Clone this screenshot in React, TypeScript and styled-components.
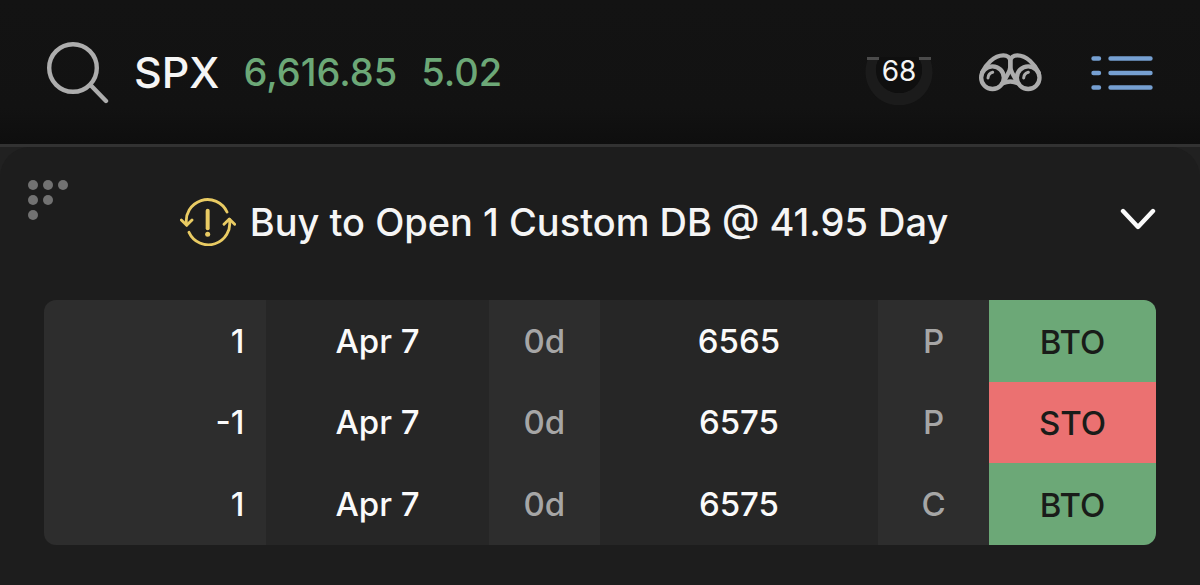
import React from "react";
import styled, { createGlobalStyle } from "styled-components";

const GlobalStyle = createGlobalStyle`
  *, *::before, *::after { box-sizing: border-box; }
  html { background: #1d1d1d; }
  body {
    margin: 0;
    background: #1d1d1d;
    color: #f5f5f5;
    font-family: Inter, "Liberation Sans", sans-serif;
    font-weight: 500;
  }
`;

const Page = styled.div`
  display: flex;
  flex-direction: column;
  min-height: 100vh;
  background: #212121;
`;

const TopBar = styled.header`
  display: flex;
  align-items: center;
  height: 147px;
  padding: 0 46px 0 44px;
  border-bottom: 3px solid #323232;
  background: linear-gradient(#131313 0%, #121212 75%, #0e0e0e 100%);
`;

const IconButton = styled.button`
  display: flex;
  align-items: center;
  justify-content: center;
  padding: 0;
  border: 0;
  background: none;
  color: ${({ $color }: { $color: string }) => $color};
  cursor: pointer;

  svg { display: block; }
`;

const Quote = styled.div`
  display: flex;
  align-items: center;
  flex: 1;
  margin-left: 22px;
  line-height: 48px;
  white-space: nowrap;
`;

const Symbol = styled.span`
  font-size: 43px;
`;

const Price = styled.span`
  margin-left: 24px;
  color: #6ca877;
  font-size: 38px;
`;

const Tools = styled.div`
  display: flex;
  align-items: center;
  gap: 45px;
`;

const Gauge = styled.div`
  display: grid;
  place-items: center;
  margin-top: 18px;

  > * { grid-area: 1 / 1; }
`;

const GaugeValue = styled.span`
  align-self: start;
  font-size: 28px;
  font-weight: 400;
  line-height: 28px;
`;

const Panel = styled.main`
  flex: 1;
  padding: 33px 44px 40px;
  border-radius: 30px 30px 0 0;
  background: #1d1d1d;
`;

const OrderHeader = styled.div`
  display: flex;
  align-items: flex-start;
  height: 120px;
  margin-left: -16px;
`;

const OrderTitle = styled.div`
  display: flex;
  align-items: center;
  justify-content: center;
  flex: 1;
  gap: 14px;
  margin-top: 18px;
  padding-right: 60px;
`;

const TitleText = styled.h1`
  margin: 0;
  font-size: 38px;
  font-weight: 500;
  line-height: 48px;
  white-space: nowrap;
`;

const ExpandButton = styled(IconButton)`
  margin-top: 28px;
`;

const Legs = styled.table`
  width: 100%;
  height: 245px;
  table-layout: fixed;
  border-collapse: collapse;
  border-radius: 12px;
  overflow: hidden;
  font-size: 33px;
  line-height: 40px;
  text-align: center;
`;

const Column = styled.col<{ $width: number }>`
  width: ${({ $width }) => $width}%;
`;

const Cell = styled.td<{ $dim?: boolean }>`
  padding: 0;
  background: ${({ $dim }) => ($dim ? "#2d2d2d" : "#262626")};
  color: ${({ $dim }) => ($dim ? "#a6a6a6" : "#fafafa")};
`;

const QuantityCell = styled(Cell)`
  padding-right: 22px;
  background: #2d2d2d;
  text-align: right;
`;

const ActionCell = styled(Cell)<{ $buy: boolean }>`
  padding-top: 2px;
  background: ${({ $buy }) => ($buy ? "#6ca877" : "#eb7171")};
  color: #191c19;
`;

const legs = [
  { quantity: "1", expiry: "Apr 7", days: "0d", strike: "6565", type: "P", action: "BTO" },
  { quantity: "-1", expiry: "Apr 7", days: "0d", strike: "6575", type: "P", action: "STO" },
  { quantity: "1", expiry: "Apr 7", days: "0d", strike: "6575", type: "C", action: "BTO" },
];

const SearchIcon = () => (
  <svg width="68" height="64" viewBox="0 0 68 64" fill="none" stroke="currentColor" strokeWidth="4.4" strokeLinecap="round">
    <circle cx="29" cy="28" r="23.8" />
    <path d="M46.5 45L62 61" />
  </svg>
);

const GaugeArc = () => (
  <svg width="68" height="48" viewBox="0 0 68 48" aria-hidden="true">
    <path d="M4 0A33.5 33.5 0 1 0 64 0H53A23 23 0 1 1 15 0Z" fill="#1b1b1b" />
    <path d="M15 0A23 23 0 1 0 53 0Z" fill="#0f0f0f" />
    <path d="M2 1.5H14M54 1.5H66" stroke="#4b4b4b" strokeWidth="3" />
  </svg>
);

const BinocularsIcon = () => (
  <svg width="64" height="40" viewBox="0 0 192 120" fill="none" stroke="currentColor" strokeWidth="13" strokeLinecap="round" strokeLinejoin="round">
    <circle cx="43.5" cy="77" r="34" />
    <circle cx="150.5" cy="77" r="34" />
    <path d="M12 62C23 38 48 10 76 10C88 10 97 17 97 28V44C97 58 88 66 79 86" />
    <path d="M182 62C171 38 146 10 118 10C106 10 97 17 97 28V44C97 58 106 66 115 86" />
    <path d="M74 94Q97 83 120 94" />
    <path d="M30 78Q31 64 44 61M137 78Q138 64 151 61" strokeWidth="9" />
  </svg>
);

const ListIcon = () => (
  <svg width="67" height="40" viewBox="-4 -3 67 40" fill="none" stroke="currentColor" strokeWidth="4.4" strokeLinecap="round">
    <path d="M2.5 3.5H8M19.5 3.5H59.5M2.5 18H8M19.5 18H59.5M2.5 32.5H8M19.5 32.5H59.5" />
  </svg>
);

const DragDots = () => (
  <svg width="40" height="40" viewBox="0 0 40 40" fill="currentColor">
    <circle cx="5" cy="5" r="5" />
    <circle cx="20" cy="5" r="5" />
    <circle cx="35" cy="5" r="5" />
    <circle cx="5" cy="20" r="5" />
    <circle cx="20" cy="20" r="5" />
    <circle cx="5" cy="35" r="5" />
  </svg>
);

const PendingIcon = () => (
  <svg width="56" height="48" viewBox="0 0 168 144" fill="none" stroke="#e9cb63" strokeWidth="8.5" strokeLinecap="round" strokeLinejoin="round" aria-hidden="true">
    <path d="M20 81A64 64 0 0 1 141 42" />
    <path d="M27 103A64 64 0 0 0 148 64" />
    <path d="M4 66L20 82L36 66M132 79L148 63L164 79" />
    <path d="M83 38V91" strokeWidth="12" />
    <circle cx="83" cy="109" r="7.5" fill="#e9cb63" stroke="none" />
  </svg>
);

const ChevronIcon = () => (
  <svg width="36" height="22" viewBox="0 0 36 22" fill="none" stroke="currentColor" strokeWidth="4.4" strokeLinecap="round" strokeLinejoin="round">
    <path d="M3 3L18 19L33 3" />
  </svg>
);

export default function App() {
  return (
    <>
      <GlobalStyle />
      <Page>
        <TopBar>
          <IconButton type="button" aria-label="Search" $color="#adadad">
            <SearchIcon />
          </IconButton>
          <Quote>
            <Symbol>SPX</Symbol>
            <Price>6,616.85</Price>
            <Price>5.02</Price>
          </Quote>
          <Tools>
            <Gauge>
              <GaugeArc />
              <GaugeValue>68</GaugeValue>
            </Gauge>
            <IconButton type="button" aria-label="Watchlist" $color="#acacac">
              <BinocularsIcon />
            </IconButton>
            <IconButton type="button" aria-label="List view" $color="#76a0d2">
              <ListIcon />
            </IconButton>
          </Tools>
        </TopBar>
        <Panel>
          <OrderHeader>
            <IconButton type="button" aria-label="Move order" $color="#727272">
              <DragDots />
            </IconButton>
            <OrderTitle>
              <PendingIcon />
              <TitleText>Buy to Open 1 Custom DB @ 41.95 Day</TitleText>
            </OrderTitle>
            <ExpandButton type="button" aria-label="Expand order" $color="#fafafa">
              <ChevronIcon />
            </ExpandButton>
          </OrderHeader>
          <Legs aria-label="Order legs">
            <colgroup>
              <Column $width={20} />
              <Column $width={20} />
              <Column $width={10} />
              <Column $width={25} />
              <Column $width={10} />
              <Column $width={15} />
            </colgroup>
            <tbody>
              {legs.map((leg, index) => (
                <tr key={index}>
                  <QuantityCell>{leg.quantity}</QuantityCell>
                  <Cell>{leg.expiry}</Cell>
                  <Cell $dim>{leg.days}</Cell>
                  <Cell>{leg.strike}</Cell>
                  <Cell $dim>{leg.type}</Cell>
                  <ActionCell $buy={leg.action === "BTO"}>{leg.action}</ActionCell>
                </tr>
              ))}
            </tbody>
          </Legs>
        </Panel>
      </Page>
    </>
  );
}
